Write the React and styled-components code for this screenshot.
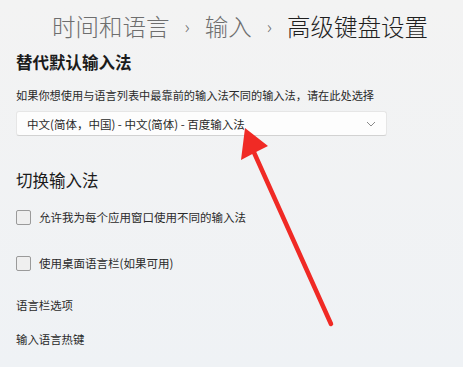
import React from "react";
import styled, { createGlobalStyle } from "styled-components";

const GlobalStyle = createGlobalStyle`
  html, body {
    margin: 0;
    padding: 0;
    background: #f2f3f4;
  }
  body {
    font-family: "Noto Sans CJK SC", "Noto Sans", sans-serif;
    color: #1b1b1b;
  }
`;

const Page = styled.div`
  position: relative;
  width: 463px;
  height: 367px;
  overflow: hidden;
  background: linear-gradient(#f3f3f3, #eff2f5);
  display: flex;
  flex-direction: column;
  padding: 0 16px;
  box-sizing: border-box;
`;

const Breadcrumb = styled.div`
  display: flex;
  align-items: center;
  gap: 15px;
  height: 34px;
  margin-top: 9px;
  padding-left: 36px;
  font-size: 23.5px;
  font-weight: 300;
  white-space: nowrap;
`;

const Crumb = styled.span`
  color: ${(p) => (p.$current ? "#1f1f1f" : "#6e6e6e")};
`;

const Sep = styled.span`
  color: #6e6e6e;
  font-size: 18px;
`;

const SectionTitle = styled.div`
  font-size: 16.5px;
  font-weight: ${(p) => (p.$strong ? 600 : 400)};
  line-height: 22px;
  margin-top: ${(p) => p.$top}px;
  color: #1b1b1b;
`;

const Hint = styled.div`
  font-size: 11.2px;
  line-height: 16px;
  margin-top: 14px;
  color: #2a2a2a;
  white-space: nowrap;
`;

const Select = styled.div`
  width: 371px;
  height: 25px;
  margin-top: 8px;
  box-sizing: border-box;
  background: #fdfdfd;
  border: 1px solid #e6e6e6;
  border-bottom-color: #d2d2d2;
  border-radius: 3px;
  display: flex;
  align-items: center;
  justify-content: space-between;
  padding: 0 10px 0 10px;
  font-size: 11.5px;
  color: #2a2a2a;
`;

const Check = styled.label`
  display: flex;
  align-items: center;
  gap: 8px;
  margin-top: ${(p) => p.$top}px;
  font-size: 11.5px;
  line-height: 16px;
  color: #2a2a2a;
`;

const Box = styled.span`
  width: 15px;
  height: 15px;
  box-sizing: border-box;
  border: 1px solid #9a9a9a;
  border-radius: 2px;
  background: #efefef;
`;

const LinkRow = styled.div`
  font-size: 11.4px;
  line-height: 16px;
  margin-top: ${(p) => p.$top}px;
  color: #2a2a2a;
`;

const Arrow = styled.svg`
  position: absolute;
  left: 0;
  top: 0;
  pointer-events: none;
`;

export default function App() {
  return (
    <>
      <GlobalStyle />
      <Page>
        <Breadcrumb>
          <Crumb>时间和语言</Crumb>
          <Sep>›</Sep>
          <Crumb>输入</Crumb>
          <Sep>›</Sep>
          <Crumb $current>高级键盘设置</Crumb>
        </Breadcrumb>

        <SectionTitle $strong $top={8}>替代默认输入法</SectionTitle>
        <Hint>如果你想使用与语言列表中最靠前的输入法不同的输入法，请在此处选择</Hint>
        <Select>
          <span>中文(简体，中国) - 中文(简体) - 百度输入法</span>
          <svg width="10" height="6" viewBox="0 0 10 6">
            <path d="M1 1 L5 5 L9 1" fill="none" stroke="#8a8a8a" strokeWidth="1" />
          </svg>
        </Select>

        <SectionTitle $top={33}>切换输入法</SectionTitle>
        <Check $top={18}>
          <Box />
          允许我为每个应用窗口使用不同的输入法
        </Check>
        <Check $top={30}>
          <Box />
          使用桌面语言栏(如果可用)
        </Check>

        <LinkRow $top={26}>语言栏选项</LinkRow>
        <LinkRow $top={18}>输入语言热键</LinkRow>

        <Arrow width="463" height="367" viewBox="0 0 463 367">
          <line x1="331" y1="324" x2="252" y2="148" stroke="#f02a25" strokeWidth="4.5" strokeLinecap="round" />
          <polygon points="245,128 268,146 258,151 241,160" fill="#f02a25" />
        </Arrow>
      </Page>
    </>
  );
}
